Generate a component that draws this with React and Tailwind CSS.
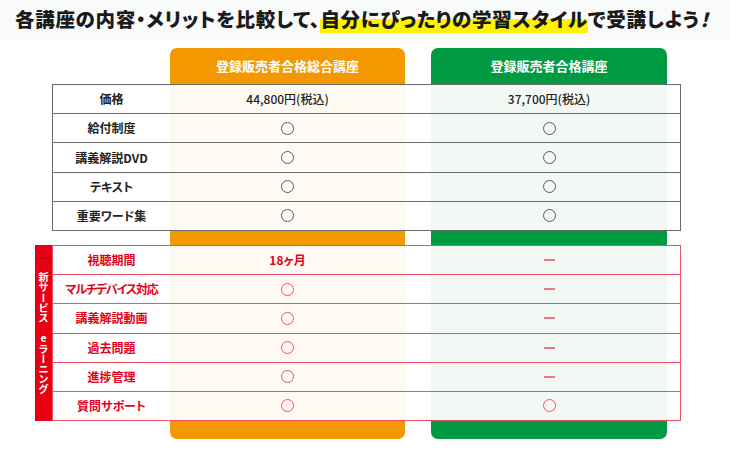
const grayRows = [
  { label: "価格", a: "44,800円(税込)", b: "37,700円(税込)" },
  { label: "給付制度", a: "o", b: "o" },
  { label: "講義解説DVD", a: "o", b: "o" },
  { label: "テキスト", a: "o", b: "o" },
  { label: "重要ワード集", a: "o", b: "o" },
];

const redRows = [
  { label: "視聴期間", a: "18ヶ月", b: "-" },
  { label: "マルチデバイス対応", a: "o", b: "-", tight: true },
  { label: "講義解説動画", a: "o", b: "-" },
  { label: "過去問題", a: "o", b: "-" },
  { label: "進捗管理", a: "o", b: "-" },
  { label: "質問サポート", a: "o", b: "o" },
];

function Mark({ value, red }) {
  if (value === "o") {
    return (
      <div
        className={
          red
            ? "w-[13px] h-[13px] rounded-full border-[1.4px] border-[#ee5064]"
            : "w-[13px] h-[13px] rounded-full border-[1.4px] border-[#5a5a5a]"
        }
      />
    );
  }
  if (value === "-") {
    return <div className="w-[11px] h-[2px] bg-[#f07585]" />;
  }
  return (
    <span className={red ? "text-[12px] font-bold text-[#e60020]" : "text-[12px] font-medium text-[#222]"}>
      {value}
    </span>
  );
}

function Row({ row, red }) {
  return (
    <div className="flex-1 grid grid-cols-[117px_235px_26px_236px] items-center">
      <div
        className={
          (red ? "text-[#e60020]" : "text-[#222]") +
          (row.tight ? " tracking-[-1.2px]" : "") +
          " text-center text-[12px] font-bold"
        }
      >
        {row.label}
      </div>
      <div className="flex justify-center">
        <Mark value={row.a} red={red} />
      </div>
      <div />
      <div className="flex justify-center">
        <Mark value={row.b} red={red} />
      </div>
    </div>
  );
}

export default function App() {
  return (
    <div
      className="w-[730px] h-[454px] bg-white overflow-hidden [font-feature-settings:'palt']"
      style={{ fontFamily: '"Noto Sans CJK JP", "Noto Sans", sans-serif' }}
    >
      <div className="h-[40px] bg-[#f9fafa] pl-[15px] pt-[6px]">
        <h1 className="text-[19.5px] font-black text-[#1a1a1a] leading-[26px] tracking-[0.7px] whitespace-nowrap">
          各講座の内容・メリットを比較して、
          <span className="bg-[linear-gradient(transparent_52%,#fff200_52%)]">自分にぴったりの学習スタイル</span>
          で受講しよう<span className="italic">！</span>
        </h1>
      </div>

      <div className="mt-[8px] grid grid-cols-[35px_17px_118px_235px_26px_236px_14px] grid-rows-[36px_147px_14px_176px_18px]">
        {/* orange column */}
        <div className="col-start-4 row-start-1 bg-[#f39800] rounded-t-[7px] flex items-center justify-center text-white text-[13px] font-bold">
          登録販売者合格総合講座
        </div>
        <div className="col-start-4 row-start-2 bg-[#fefaf3]" />
        <div className="col-start-4 row-start-3 bg-[#f39800]" />
        <div className="col-start-4 row-start-4 bg-[#fefaf3]" />
        <div className="col-start-4 row-start-5 bg-[#f39800] rounded-b-[7px]" />

        {/* green column */}
        <div className="col-start-6 row-start-1 bg-[#009a42] rounded-t-[7px] flex items-center justify-center text-white text-[13px] font-bold">
          登録販売者合格講座
        </div>
        <div className="col-start-6 row-start-2 bg-[#f2f8f4]" />
        <div className="col-start-6 row-start-3 bg-[#009a42]" />
        <div className="col-start-6 row-start-4 bg-[#f2f8f4]" />
        <div className="col-start-6 row-start-5 bg-[#009a42] rounded-b-[7px]" />

        {/* standard items */}
        <div className="col-start-3 col-end-8 row-start-2 border border-[#6a6a6a] flex flex-col divide-y divide-[#6a6a6a]">
          {grayRows.map((row) => (
            <Row key={row.label} row={row} />
          ))}
        </div>

        {/* e-learning band */}
        <div className="col-start-2 row-start-4 bg-[#e60012] flex flex-col">
          <div className="h-[14px] border-b border-[#c0000c]" />
          <div className="flex-1 flex items-center justify-center">
            <span className="[writing-mode:vertical-rl] [text-orientation:upright] text-white text-[10.5px] font-bold leading-[17px] tracking-[-0.3px]">
              新サービス eラーニング
            </span>
          </div>
          <div className="h-[14px]" />
        </div>

        <div className="col-start-3 col-end-8 row-start-4 border border-[#ef5164] flex flex-col divide-y divide-[#ef5164]">
          {redRows.map((row) => (
            <Row key={row.label} row={row} red />
          ))}
        </div>
      </div>
    </div>
  );
}
